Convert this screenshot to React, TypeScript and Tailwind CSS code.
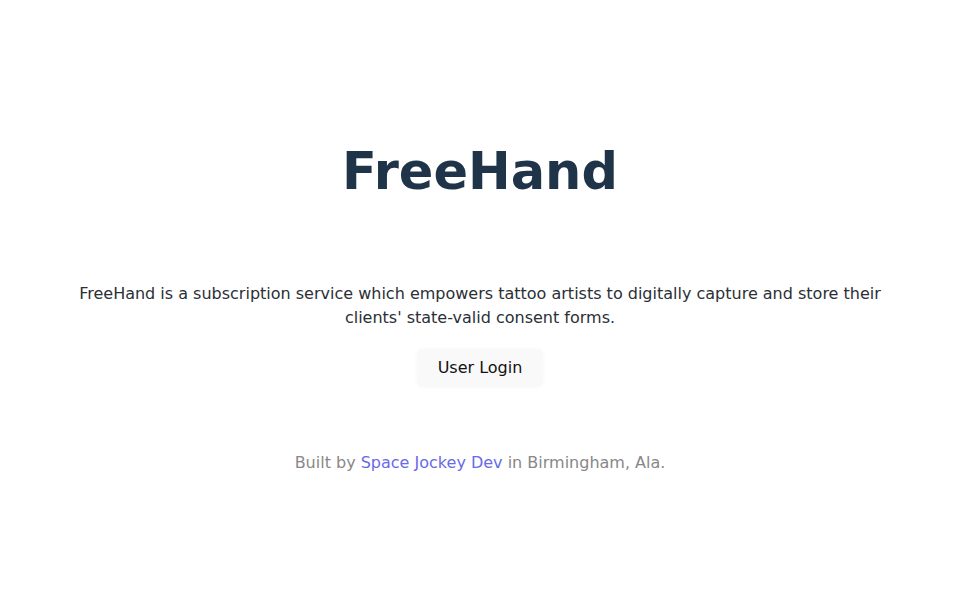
export default function App() {
  return (
    <div
      className="min-h-screen bg-white flex flex-col items-center text-center"
      style={{ fontFamily: '"DejaVu Sans", sans-serif' }}
    >
      <h1 className="mt-[141px] text-[51px] leading-[62px] font-bold text-[#1f3349]">
        FreeHand
      </h1>

      <p className="mt-[79px] max-w-[832px] text-base leading-6 text-[#2b2f36]">
        FreeHand is a subscription service which empowers tattoo artists to digitally capture and
        store their clients' state-valid consent forms.
      </p>

      <button className="mt-[19px] px-[21px] py-[7px] rounded-md bg-[#f9f9f9] shadow-[0_0_4px_rgba(0,0,0,0.04)] text-base leading-6 text-[#111]">
        User Login
      </button>

      <p className="mt-[64px] text-base leading-6 text-[#888]">
        Built by <a className="text-[#6a6ae6]">Space Jockey Dev</a> in Birmingham, Ala.
      </p>
    </div>
  )
}
